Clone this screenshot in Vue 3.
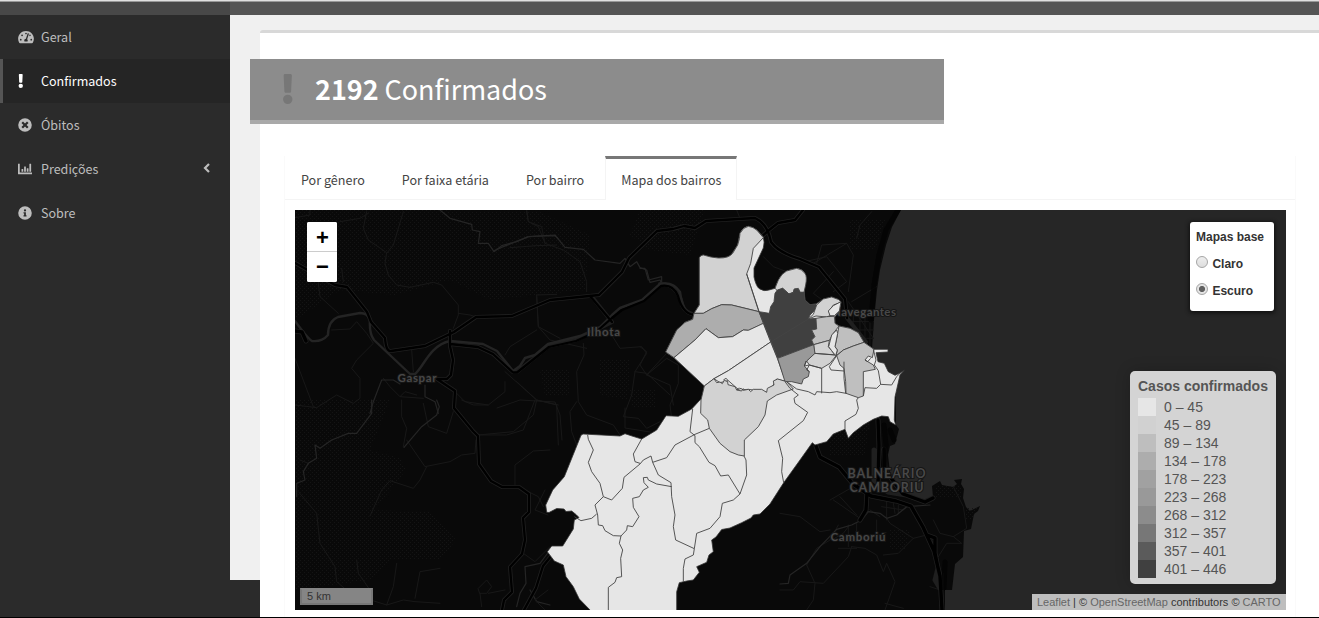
<script setup>
const ranges = [
  { label: '0 – 45', c: 'c0' }, { label: '45 – 89', c: 'c1' }, { label: '89 – 134', c: 'c2' },
  { label: '134 – 178', c: 'c3' }, { label: '178 – 223', c: 'c4' }, { label: '223 – 268', c: 'c5' },
  { label: '268 – 312', c: 'c6' }, { label: '312 – 357', c: 'c7' }, { label: '357 – 401', c: 'c8' },
  { label: '401 – 446', c: 'c9' }
]
const tabs = ['Por gênero', 'Por faixa etária', 'Por bairro', 'Mapa dos bairros']
const menu = [
  { label: 'Geral', icon: 'gauge' },
  { label: 'Confirmados', icon: 'bang', active: true },
  { label: 'Óbitos', icon: 'times' },
  { label: 'Predições', icon: 'chart', sub: true },
  { label: 'Sobre', icon: 'info' }
]
const city = 'M699.3 258.5Q700 255 703 255Q712 258 718 258Q729 258.500 732 253.500L737.500 245C739 239 739 236 740 233Q743 227 748.300 226.300Q753 227 757 230L763 236.500Q765 242 763.300 248L754 268V277Q756 286 759 288.500Q764 292 769 290L775 288.300Q777 280 786.700 271Q796 267 802 270Q807 275 806 280L804 289L805 300L810 304.700L816 304L823.300 299L831.700 297L839 299.700L841 302.300L839.300 311L835 316.700V323.300L839 326L850 328.300L858.300 332.700L864 342.300L873.300 349.300H888V352L876 352.700L878 361.700L884.300 363.300L888.300 371.700L895 375.300L900.700 372.700L904.300 370L900 375L895 397L894.300 420L895.700 425L890 421.700L888.300 416.700L881.700 416L873.300 419.300L863.300 425L853.300 432.700L848.300 438.300L845 429.300L833.300 434L826.700 441.700L815 445L812.300 442.700L800 460L783.300 483.300L770 504L760 514L753.300 515L751 518L741.700 522.700L730 528L721.700 529.500L716 537L711.700 540L713.300 551.700L709 555L706.700 562.300L696.700 566.700L699.300 572.300L693.300 580L686.700 581L679.300 582.700L676.700 591.700V611H591L579.300 599L573.300 586.700L566 576.700L563.300 565L554.300 561L547.300 551.700L551.700 546H562.700L573.300 529L574.300 520L579 517.500L576 514.500L571.700 511L566 511.500L564 509L556.700 508.500L549 512.500L546.700 512.300L545.700 505L552.700 490L564.300 476.700L581 435.300L583 434L620 436L625 433.700L632 436L641.700 439L656.700 430L666 415.700L678.300 416.300L691.700 409L699.300 400.700L702.700 398L704.300 385L674 357.700L665.700 352L676.700 330L685 322.300L692.700 319.300L694 313.300L699.300 305Z'
</script>

<template>
  <div class="page">
    <header class="top"><div class="brand"></div></header>
    <div class="main">
      <aside class="sidebar">
        <a v-for="m in menu" :key="m.label" class="item" :class="{ active: m.active }">
          <svg v-if="m.icon === 'gauge'" class="ic gauge" viewBox="0 0 576 512"><path fill-rule="evenodd" d="M288 32C129 32 0 161 0 320c0 53 14 102 39 145 6 10 17 15 28 15h442c11 0 22-5 28-15 25-43 39-92 39-145C576 161 447 32 288 32zm0 64c18 0 32 14 32 32s-14 32-32 32-32-14-32-32 14-32 32-32zM96 384a32 32 0 1 1 0-64 32 32 0 0 1 0 64zm48-160a32 32 0 1 1 0-64 32 32 0 0 1 0 64zm246-72-61 184c14 12 23 28 23 48 0 12-4 22-9 32H233c-5-10-9-20-9-32 0-34 26-62 60-64l61-183c4-13 18-20 31-15 12 4 19 18 14 30zm15 61 17-51a32 32 0 1 1-17 51zm75 171a32 32 0 1 1 0-64 32 32 0 0 1 0 64z"/></svg>
          <svg v-else-if="m.icon === 'bang'" class="ic bang" viewBox="0 0 192 512"><path d="M176 432a80 80 0 1 1-160 0 80 80 0 0 1 160 0zM26 25l13 272c1 13 12 23 24 23h66c13 0 23-10 24-23l13-272c1-14-10-25-24-25H50c-14 0-25 11-24 25z"/></svg>
          <svg v-else-if="m.icon === 'times'" class="ic" viewBox="0 0 512 512"><path fill-rule="evenodd" d="M256 8a248 248 0 1 0 0 496 248 248 0 0 0 0-496zm122 313c4 5 4 12 0 17l-40 40c-5 4-12 4-17 0l-65-66-65 66c-5 4-12 4-17 0l-40-40c-4-5-4-12 0-17l66-65-66-65c-4-5-4-12 0-17l40-40c5-4 12-4 17 0l65 66 65-66c5-4 12-4 17 0l40 40c4 5 4 12 0 17l-66 65z"/></svg>
          <svg v-else-if="m.icon === 'chart'" class="ic" viewBox="0 0 512 512"><path d="M0 64h64v320h448v64H20Q0 448 0 428zM128 268q0-12 12-12h40q12 0 12 12v84h-64zM224 172q0-12 12-12h40q12 0 12 12v180h-64zM320 236q0-12 12-12h40q12 0 12 12v116h-64zM416 76q0-12 12-12h40q12 0 12 12v276h-64z"/></svg>
          <svg v-else class="ic" viewBox="0 0 512 512"><path fill-rule="evenodd" d="M256 8a248 248 0 1 0 0 496 248 248 0 0 0 0-496zm0 110a42 42 0 1 1 0 84 42 42 0 0 1 0-84zm56 254c0 7-5 12-12 12h-88c-7 0-12-5-12-12v-24c0-7 5-12 12-12h12v-64h-12c-7 0-12-5-12-12v-24c0-7 5-12 12-12h64c7 0 12 5 12 12v100h12c7 0 12 5 12 12z"/></svg>
          <span>{{ m.label }}</span>
          <svg v-if="m.sub" class="chev" viewBox="0 0 8 10"><path d="M6 1 2 5l4 4" fill="none" stroke="currentColor" stroke-width="2.200"/></svg>
        </a>
      </aside>
      <main class="content">
        <div class="gutter"></div>
        <section class="box">
          <div class="value">
            <svg class="big" viewBox="0 0 192 512"><path d="M176 432a80 80 0 1 1-160 0 80 80 0 0 1 160 0zM26 25l13 272c1 13 12 23 24 23h66c13 0 23-10 24-23l13-272c1-14-10-25-24-25H50c-14 0-25 11-24 25z"/></svg>
            <h3><b>2192</b> Confirmados</h3>
          </div>
          <div class="panel">
            <nav class="tabs">
              <a v-for="(t, i) in tabs" :key="t" class="tab" :class="{ on: i === 3 }">{{ t }}</a>
            </nav>
            <div class="map">
              <svg class="canvas" viewBox="295 210 991 400">
                <defs>
                  <pattern id="dots" width="4" height="4" patternUnits="userSpaceOnUse"><path d="M0 0h1v1H0zM2 2h1v1H2z" fill="#141414"/></pattern>
                </defs>
                <rect x="295" y="210" width="991" height="400" fill="#090909"/>
                <path fill="url(#dots)" d="M295 210H430L540 212 590 235 585 290 490 300 450 280 395 295 340 290 295 320ZM640 210H705L690 255 650 250 630 235ZM658 212H695L690 248 655 250ZM295 400H390L370 450 400 458 406 470 375 510 430 512 456 540 440 560 390 560 370 580 295 590ZM540 370H570V395H545ZM600 360H630L628 400 600 395ZM630 390H655V408H632ZM850 220H885L875 250 850 250ZM830 430 870 420 865 455 830 455ZM890 530H910L905 550H890Z"/>
                <path fill="#262626" d="M901 210 892 227 886 245 880 270 877 290 874 320 872 349 874 365 890 380 896 390V425L899 429 895 444 890 446 888 455 890 472 899 486 912 498 922 500 933 497 932 486 940 481 942 485 953 487 957 484 954 480 962 479 961 484 964 489 963 498 966 507 970 511 980 506 978 511 974 514 971 529 964 531 963 557 955 564 952 590 945 590V610H1286V210Z"/>
                <path fill="url(#dots)" d="M935 486 962 485V498H935ZM965 508H977L972 520H965Z"/>
                <g fill="none" stroke-linejoin="round" stroke-linecap="round">
                  <!-- minor roads and streams -->
                  <g class="minor" transform="translate(290 205) scale(.33333)">
                    <path d="M15 38 60 30 60 15M230 20 220 70 235 105 290 143 285 175 295 210 320 240 360 247 430 232 455 240 505 300V330L490 370M505 325 540 330 565 338M340 20 310 120 290 145M150 50 210 40 235 25M85 235 90 275 145 325M125 375 180 372 200 350 230 385 250 415 200 465 185 490 210 520 210 580 190 595 140 570 80 608 15 600M15 460 70 605M365 435 370 500M280 520 300 545 330 575 400 580M330 575 345 560 380 570M155 190 160 230M740 270 745 365 810 400M740 270 800 268M645 450 660 425 740 375M645 530 645 560 595 600 525 590 500 565M680 530 740 585 805 600M710 20 715 50 745 65 765 115"/>
                    <path class="m2" d="M450 15 480 40 545 58 547 75 570 80 565 115 595 115 612 140 635 122 680 110 715 95 795 92 805 102M240 625 250 590 275 525 310 525 330 537M405 540 405 575 435 590 445 625"/>
                  </g>
                  <g class="minor" transform="translate(420 205) scale(.33333)">
                    <path d="M320 15 325 50 365 65 375 115 430 135 480 170 500 230 500 260M270 128 350 122 410 120M350 275 355 365 390 405 500 430M575 390 600 430 665 425 680 445 645 500 635 570 610 635 655 640 680 670 720 650M680 510 740 460 775 480 775 535 750 600 755 640M645 500 680 505 750 570M490 415 492 450 470 500 475 590 500 630 580 660 600 690M255 500 350 585 410 600 415 720M470 590 450 620 455 680 470 720M350 585 340 630 280 680 175 690"/>
                    <path class="m2" d="M220 138 250 125 325 95 405 90 435 127 490 133 525 165 600 175 615 160 630 185 650 170 660 188 680 195 690 232 720 225 725 235"/>
                  </g>
                  <g class="minor" transform="translate(220 400) scale(.33333)">
                    <path d="M545 0 545 50 560 85 550 140M560 120 615 200 690 185 725 165 765 160 768 120M610 10 625 80 680 100 700 35M770 105 860 105 910 90 945 0M885 255V195L940 153 990 150M620 200 600 240 580 265 510 242 485 270 450 348M235 275 290 340 300 430 345 500 350 545 385 575 420 590 500 615 520 560 530 490M410 480 415 520 450 570M585 595 600 515 660 505M725 0 760 15 805 15M925 275 955 290 970 320M910 460 945 485 990 440M775 565 800 540 815 560 800 580 780 580ZM805 580 855 570M780 580 785 620M500 615 550 600 585 605 660 610M240 180 265 190"/>
                    <path class="m2" d="M455 0 455 40 410 100 385 100 335 120 300 145 285 135 290 175 265 190 250 215 255 240 230 250V290M650 0 658 20 650 45 605 80 575 115 552 142M990 450 960 490 915 500 918 550 900 580 890 620M930 570 950 605 990 615"/>
                  </g>
                  <g class="minor" transform="translate(780 400) scale(.33333)">
                    <path d="M0 340 60 350 120 395 150 390M175 375 150 420 110 445 80 495M205 380 190 400 155 420M80 495 105 550 100 600 80 630M0 570 40 570 60 545 130 550 205 470 215 440M215 440 255 445 290 465 310 515 320 490 345 545 315 630M315 610 370 625M310 465 355 460 400 415 330 370 320 355M400 415 440 405M475 470 500 430 545 430 520 410 480 400 460 360M150 300 220 260M160 300 240 355M180 290 230 345M205 440 205 375M230 420 230 370M175 445 230 445M290 360V415M305 320 370 330 390 315M320 300 320 360M340 310 345 340M355 315 355 340M270 330 300 350M450 560 480 570M490 520 490 570M520 260 550 320 560 385 520 410"/>
                    <path class="m2" d="M0 552 25 550 30 525 80 490 120 440 170 388 215 375 245 360 265 335 300 340 320 355 350 345 380 320 450 315"/>
                  </g>
                  <g class="minor" transform="translate(640 205) scale(.33333)">
                    <path d="M0 425 20 440 0 480 20 510 80 445M20 510 90 540 100 600M650 100 660 60 695 20M520 175 620 115 640 150 625 260M495 170 560 155 620 230 580 260M635 290 710 245M290 15 300 40M370 155 400 185 440 200M530 175 545 120 620 115M580 200 520 265 560 295M625 290 700 400M640 330V390M660 320V400M675 320V420M690 330V425M630 350H700M650 375H700M640 400H700"/>
                    <path class="m2" d="M0 190 15 190 25 225 65 215 65 235"/>
                  </g>
                  <path class="minor" d="M497 408 520 400 555 402 560 415 562 440M545 490 535 510 548 515M548 590 535 600 545 610M625 408 625 428 650 432"/>
                  <!-- motorways -->
                  <g class="casing">
                    <path d="M295 263 335 285 347 287 367 312 371 322 385 338Q386 352 391 351L425 346 454 332 476 317 512 316 550 300 599 295 622 272 629 258 657 231 673 229 684 226 695 228 706 221 722 220 755 218Q768 224 771 242 779 253 800 259L819 267 845 299 847 318 866 342"/>
                    <path d="M450 331V346L453 360 451 375 447 379H437L455 391 454 408 473 431 478 436 479 464 491 481 502 487H519L529 494 529 512 523 518 525 540 522 554 510 567 512 592 504 600 502 610M450 344 478 347 493 354 513 372H517L549 346 576 340 596 330 612 322M592 297 612 322M660 284Q674 283 681 300 682 311 692 314M760 238Q770 229 778 223L795 220 803 210M524 610 536 588 543 566 556 550"/>
                    <path class="wide" d="M816 446 820 457 839 467 853 484 871 496 896 501 911 506 923 527 934 551 940 576 942 610M927 535 935 538V553L938 568 935 580 941 590M878 420 879 445 878 485M884 449 885 470 903 494 925 502 933 498M874 450 874 480 888 492 906 495M867 492 866 510 860 520M295 331 302 332 306 341"/>
                  </g>
                  <!-- river -->
                  <path stroke="#242424" stroke-width="2.400" d="M295 321Q308 339 312 341 322 342 328 335 328 321 338 317L360 313Q368 313 370 320 369 333 374 340L410 374H415C423 368 430 345 450 341L483 344 497 351 513 371 520 366 525 358 535 355 548 344 580 336 600 327 612 315 620 308 642 300 660 284Q673 281 680 292 683 312 691 314"/>
                  <g class="road">
                    <path d="M295 263 335 285 347 287 367 312 371 322 385 338Q386 352 391 351L425 346 454 332 476 317 512 316 550 300 599 295 622 272 629 258 657 231 673 229 684 226 695 228 706 221 722 220 755 218Q768 224 771 242 779 253 800 259L819 267 845 299 847 318"/>
                    <path d="M450 331V346L453 360 451 375 447 379H437L455 391 454 408 473 431 478 436 479 464 491 481 502 487H519L529 494 529 512 523 518 525 540 522 554 510 567 512 592 504 600 502 610M450 344 478 347 493 354 513 372.500H517L549 347 576 341 596 332 612 318 622 310 644 301 661 286Q673 284 678 296 682 312 692 314.500H697M590 296 612 322M760 238Q770 229 778 223L795 220 803 210M524 610 536 588 543 566 556 550"/>
                    <path class="wide" d="M816 446 820 457 839 467 853 484 871 496 896 501 911 506 923 527 934 551 940 576 942 610M927 535 935 538V553L938 568M878 420 879 445 878 485M884 449 885 470 903 494 925 502 933 498M867 492 866 510 860 520M295 331 302 332 306 341"/>
                  </g>
                  <path stroke="#030303" stroke-width="5" opacity=".75" d="M898 210 886 230 879 255 874 285 871 320M884 425 886 445 884 465M945 562 944 588M890 430 894 440"/>
                </g>
                <g class="names">
                  <text x="417" y="382" text-anchor="middle" textLength="39">Gaspar</text>
                  <text x="603.500" y="335.500" text-anchor="middle" textLength="33">Ilhota</text>
                  <text x="832" y="316" textLength="64">Navegantes</text>
                  <text class="cap" x="886.500" y="477.500" text-anchor="middle" textLength="78">BALNEÁRIO</text>
                  <text class="cap" x="886.500" y="491.700" text-anchor="middle" textLength="74">CAMBORIÚ</text>
                  <text x="858" y="540.500" text-anchor="middle" textLength="55">Camboriú</text>
                </g>

                <!-- neighbourhoods -->
                <path :d="city" fill="#e6e6e6" stroke="#333" stroke-width=".8"/>
                <g class="zones" transform="translate(640 205) scale(.33333)">
                  <path fill="#d2d2d2" d="M178 158Q182 150 190 150 215 158 235 159 267 160 278 145L293 120Q300 100 300 85 310 66 325 64 340 66 350 75L370 98 340 130 332 175 320 207 357 320 275 300 245 299 215 311 190 325 162 325 178 300Z"/>
                  <path fill="#adadad" d="M162 325H190L215 311 245 299 275 300 357 320 370 355 350 365 325 376 310 375 278 395 235 398 198 371 165 405 102 458 77 441 110 375 135 352 158 343Z"/>
                  <path fill="#e6e6e6" d="M102 458 165 405 198 371 235 398 278 395 310 375 325 376 370 355 392 411 265 497 222 521 193 543Z"/>
                  <path fill="#e6e6e6" stroke="none" d="M222 521 265 497 392 411 412 460 430 510 440 530 410 522 400 540 380 562 340 555 325 553 297 555 265 527 240 533Z"/>
                  <path fill="#d2d2d2" d="M405 250 415 225Q425 205 440 198L470 190Q485 192 495 205 502 215 497 240L492 262H480L475 250 463 252 460 262 447 267 428 250 412 257Z"/>
                  <path fill="#404040" d="M357 320 388 325 392 305 402 290 405 265 412 255 428 250 447 267 460 262 463 252H475L480 262H492L495 285 510 299 528 297 530 310 510 330 505 342 528 340 530 372 515 375 525 395 515 405 521 419 413 460Z"/>
                  <path fill="#d2d2d2" d="M505 342 520 328 530 300 550 282 575 276 597 284 603 292 580 300 567 318 570 332 560 336 528 333Z"/>
                  <path fill="#e6e6e6" d="M603 290 580 302 565 318 570 332 583 332 598 318Z"/>
                  <path fill="#bfbfbf" d="M528 340 560 335 583 334 585 355 597 363 580 385 568 406 521 419 515 405 525 395 515 375 530 372Z"/>
                  <path fill="#bfbfbf" d="M597 363 630 370 655 383 672 412 640 423 610 435 588 453 592 435 585 425 593 385Z"/>
                  <path fill="#d2d2d2" d="M521 419 568 406 565 425 575 437 585 450 523 445ZM523 445 590 450 570 475 545 490 508 480 500 468Z"/>
                  <path fill="#e6e6e6" d="M590 375 575 390 566 425 575 437 587 452 592 435 585 425 593 385Z"/>
                  <path fill="#999" d="M413 460 521 419 525 445 500 468 493 483 508 500 505 515 490 522 485 537 455 530 435 530Z"/>
                  <path fill="#bfbfbf" d="M590 452 610 435 640 423 672 412 702 433 697 458 685 453 675 465 700 480 706 493 670 500 670 573 655 578 618 565 617 530 612 490 600 480Z"/>
                  <path fill="#d2d2d2" d="M222 521 230 533 240 531 247 536 253 526 263 530 264 539 285 545 290 555 303 550 310 556 325 553 332 560 340 553 365 553 380 562 382 550 402 540 400 528 413 522 440 530 460 552 410 570 382 588 375 630 355 665 313 705V753L295 750 270 740 240 715 208 670 203 645 182 625 183 585 193 543Z"/>
                  <g fill="none">
                    <path d="M357 320 320 207M392 411 505 342M498 468 493 483 508 480 500 495 508 500M508 480 545 490V565M590 452 568 485 573 495 612 498 M612 470V520L617 565M440 530 470 552 505 560 525 570 530 560 570 563 590 560 618 565M435 530 450 550 475 570 462 580 465 595 503 622 490 647 415 707 428 760 425 800 431 833M655 578 650 585 655 610 648 628 615 648V673M670 573 675 548 710 550 722 538 755 540 770 515 782 503M700 433 708 465 703 480 715 497 722 538M675 465 683 470 692 460M297 548 290 555 305 558 310 550M265 527 258 520 250 525"/>
                  </g>
                </g>
                <g class="zones" fill="none" transform="translate(540 400) scale(.33333)">
                  <path d="M143 105 145 118 160 150 145 187 155 215 180 250 190 290 215 300 247 265 252 232 300 192 310 180 333 168 338 187 355 225 393 248 395 290 405 345 400 380 407 420 463 446 470 400 510 385 540 350 547 310 580 300 600 282 620 225 618 180 612 168M305 117 280 162 285 185 300 190M338 187 380 173 405 135 465 103 508 85M458 27 450 95 465 107V128L478 140 507 187 525 197 542 228 565 225 600 282M395 260 350 252 325 240 322 232 310 233 312 248 325 262 310 270 298 290 278 295 280 322 297 350 278 380 262 377 260 390 243 408 220 407 195 392 188 377 175 375 173 345 165 315 190 290M170 342 155 355 123 362 103 350M243 408 238 430 248 450 242 475 245 530 230 533 225 547 205 562V630M463 446 460 465 435 477 430 505V545"/>
                </g>
              </svg>

              <div class="zoomctl"><button>+</button><button>−</button></div>
              <div class="layers">
                <div>Mapas base</div>
                <label><i></i>Claro</label>
                <label><i class="sel"></i>Escuro</label>
              </div>
              <div class="legend">
                <strong>Casos confirmados</strong>
                <div v-for="r in ranges" :key="r.label" class="lr"><i :class="r.c"></i><span>{{ r.label }}</span></div>
              </div>
              <div class="scale">5 km</div>
              <div class="attr"><a>Leaflet</a> | © <a>OpenStreetMap</a> contributors © <a>CARTO</a></div>
            </div>
          </div>
        </section>
      </main>
    </div>
  </div>
</template>

<style>
html, body { margin: 0; overflow: hidden; }
</style>
<style scoped>
* { box-sizing: border-box; }
.page { width: 1319px; height: 618px; background: #2b2b2b; border-bottom: 1px solid #000; display: flex; flex-direction: column; font-family: "Source Sans Pro", "Noto Sans CJK SC", sans-serif; overflow: hidden; }
.top { height: 15px; flex: none; background: #555; border-top: 1px solid #e0e0e0; box-shadow: inset 0 1px #999; }
.brand { width: 230px; height: 13px; margin-top: 1px; background: #484848; }
.main { display: flex; flex: 1; min-height: 0; }
.sidebar { width: 230px; flex: none; }
.item { height: 44px; display: flex; align-items: center; border-left: 3px solid transparent; padding: 0 19px 0 15px; color: #bdbdbd; font-size: 12.55px; line-height: 20px; }
.item span { flex: 1; }
.item.active { background: #252525; border-color: #555; color: #fff; }
.ic { width: 14px; height: 14px; fill: currentColor; margin-right: 9px; }
.ic.gauge { width: 16px; margin-right: 7px; }
.ic.bang { width: 5.500px; margin-right: 17.500px; }
.chev { width: 8px; height: 10px; margin-top: -2px; }
.content { flex: 1; display: flex; min-width: 0; background: linear-gradient(#f0f0f0 565px, #2b2b2b 565px); }
.gutter { width: 30px; flex: none; }
.box { flex: 1; margin-top: 15px; border-top: 3px solid #d8d8d8; border-radius: 3px 0 0 0; background: #fff; display: flex; flex-direction: column; min-width: 0; }
.value { width: 694px; height: 65px; flex: none; margin: 26px 0 0 -10px; background: #8c8c8c; border-bottom: 4px solid #a9a9a9; display: flex; align-items: center; padding-left: 32px; color: #fff; }
.big { width: 11.500px; height: 30px; fill: #777; margin: -1px 21.500px 0 0; }
h3 { margin: -1px 0 0; font-size: 26.95px; line-height: 40px; font-weight: 400; }
.panel { margin: 32px 0 0 24px; width: 1012px; flex: 1; display: flex; flex-direction: column; border: solid #fafafa; border-width: 0 1px; }
.tabs { height: 44px; flex: none; border-bottom: 1px solid #f4f4f4; display: flex; }
.tab { height: 44px; padding: 11px 15px 0; margin-right: 5px; border: 1px solid transparent; border-top: 3px solid transparent; border-bottom: 0; font-size: 12.59px; line-height: 20px; color: #444; white-space: nowrap; }
.tab.on { background: #fff; border-color: #777 #f4f4f4 #fff; }
.map { position: relative; width: 991px; height: 400px; margin: 10px 0 0 10px; overflow: hidden; }
.canvas { display: block; width: 991px; height: 400px; }
.minor path, path.minor { stroke: #181818; stroke-width: 1; vector-effect: non-scaling-stroke; }
.minor .m2 { stroke: #252525; stroke-width: 1.200; }
.casing { stroke: #1f1f1f; stroke-width: 4; }
.casing .wide { stroke-width: 5; }
.road { stroke: #000; stroke-width: 2.300; }
.road .wide { stroke-width: 3.400; }
.names { font: bold 11.5px Lato, "Open Sans", sans-serif; fill: #484848; stroke: #151515; stroke-width: 2; paint-order: stroke; }
.names .cap { font-size: 12.5px; font-weight: 700; }
.zones path { stroke: #444; stroke-width: .9; vector-effect: non-scaling-stroke; stroke-linejoin: round; }
.zoomctl { position: absolute; left: 12px; top: 12px; width: 30px; height: 60px; background: #fff; border-radius: 2px; overflow: hidden; display: flex; flex-direction: column; }
.zoomctl button { height: 30px; border: 0; border-bottom: 1px solid #ccc; background: #fff; padding: 1px 0 0 1px; font: bold 22px/28px "Liberation Sans", sans-serif; color: #000; }
.zoomctl button:first-child { padding-top: 2px; }
.zoomctl button:last-child { border: 0; padding-top: 0; }
.layers { position: absolute; right: 12px; top: 12px; width: 84px; height: 89px; border-radius: 3px; background: #fff; box-shadow: 0 1px 4px 1px #101010; padding: 6px; font: bold 12px/18px "Liberation Sans", sans-serif; color: #333; }
.layers label { display: flex; align-items: center; height: 18px; margin-top: 9px; }
.layers i { width: 12px; height: 12px; border: 1px solid #a5a5a5; border-radius: 50%; background: linear-gradient(#eee, #ddd); margin: -4px 4.4px 0 0; }
.layers i.sel { background: radial-gradient(circle, #606060 0 2.700px, #e4e4e4 3.400px); }
.legend { position: absolute; right: 10px; bottom: 26px; width: 146px; height: 213px; padding: 6px 8px; background: #d4d4d4; border-radius: 5px; box-shadow: 0 0 15px rgba(0,0,0,.2); font: 14px/18px "Liberation Sans", sans-serif; color: #555; }
.legend strong { display: block; height: 21px; white-space: nowrap; }
.lr { display: flex; height: 18px; }
.lr i { width: 18px; height: 18px; margin-right: 8px; }
.c0 { background: #e6e6e6; } .c1 { background: #d1d1d1; } .c2 { background: #bebebe; } .c3 { background: #adadad; } .c4 { background: #a1a1a1; }
.c5 { background: #999; } .c6 { background: #8c8c8c; } .c7 { background: #777; } .c8 { background: #5b5b5b; } .c9 { background: #404040; }
.scale { position: absolute; left: 5px; bottom: 5px; width: 73px; height: 17px; border: 2px solid #777; border-top-color: #858585; background: #858585; padding-left: 5px; font: 11px/13px "Liberation Sans", sans-serif; color: #333; }
.attr { position: absolute; right: 0; bottom: 0; height: 16px; width: 254px; padding: 0 5px; background: #bebebe; font: 11px/16px "Liberation Sans", sans-serif; color: #333; white-space: nowrap; }
.attr a { color: #666; }
</style>
